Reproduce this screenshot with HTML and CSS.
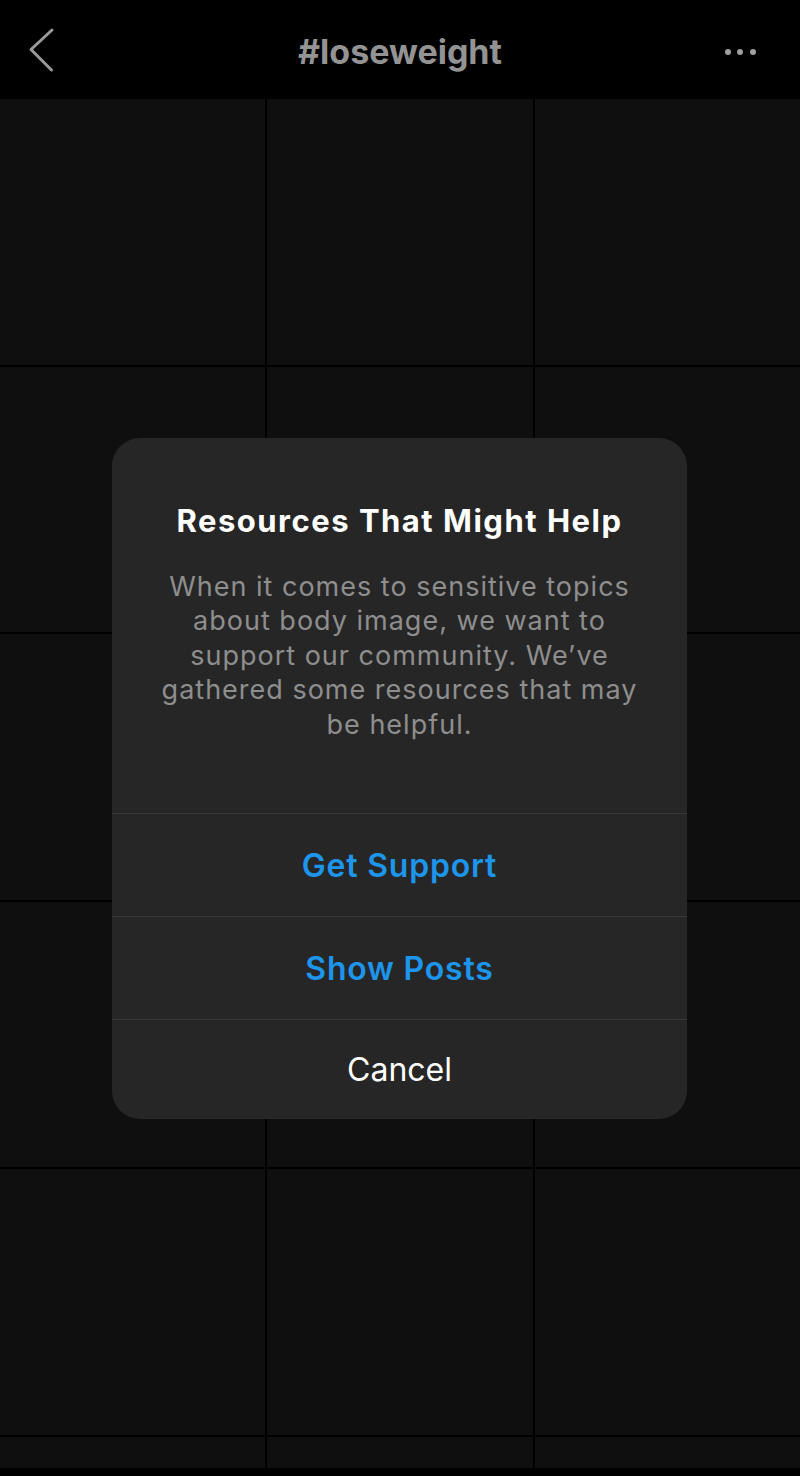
FILE: index.html
```html
<!DOCTYPE html>
<html lang="en">
<head>
  <meta charset="UTF-8" />
  <meta name="viewport" content="width=device-width, initial-scale=1.0"/>
  <title>#loseweight</title>
  <link rel="stylesheet" href="styles.css">
</head>
<body>
  <header class="topbar">
    <a class="back" aria-label="Back">
      <svg width="30" height="48" viewBox="0 0 30 48">
        <polyline points="25,3 4,22.5 24.5,43" fill="none" stroke="#9a9a9a" stroke-width="3" stroke-linecap="round" stroke-linejoin="round"/>
      </svg>
    </a>
    <h1>#loseweight</h1>
    <a class="more" aria-label="More">
      <span></span><span></span><span></span>
    </a>
  </header>

  <main class="grid">
    <div class="tile"></div><div class="tile"></div><div class="tile"></div>
    <div class="tile"></div><div class="tile"></div><div class="tile"></div>
    <div class="tile"></div><div class="tile"></div><div class="tile"></div>
    <div class="tile"></div><div class="tile"></div><div class="tile"></div>
    <div class="tile"></div><div class="tile"></div><div class="tile"></div>
    <div class="tile"></div><div class="tile"></div><div class="tile"></div>
  </main>

  <div class="dialog">
    <div class="dialog-body">
      <h2>Resources That Might Help</h2>
      <p>When it comes to sensitive topics about body image, we want to support our community. We’ve gathered some resources that may be helpful.</p>
    </div>
    <button class="action primary">Get Support</button>
    <button class="action primary">Show Posts</button>
    <button class="action cancel">Cancel</button>
  </div>
</body>
</html>
```

FILE: styles.css
```css
* { box-sizing: border-box; }
body {
  margin: 0;
  height: 1476px;
  overflow: hidden;
  background: #000;
  font-family: Inter, "Noto Sans", sans-serif;
  color: #fff;
}
.topbar {
  height: 99px;
  background: #000;
  display: flex;
  align-items: center;
  justify-content: center;
  position: relative;
}
.topbar h1 {
  margin: 4px 0 0;
  font-size: 34px;
  font-weight: 700;
  color: #939393;
}
.back {
  position: absolute;
  left: 27px;
  top: 27px;
  line-height: 0;
}
.more {
  position: absolute;
  right: 44px;
  top: 49px;
  display: flex;
  gap: 6.7px;
}
.more span {
  width: 6px;
  height: 6px;
  border-radius: 50%;
  background: #a0a0a0;
}
.grid {
  height: 1369px;
  overflow: hidden;
  display: grid;
  grid-template-columns: 1fr 1fr 1fr;
  grid-auto-rows: 265.5px;
  gap: 2px;
  background: #000;
}
.tile { background: #0f0f0f; }

.dialog {
  position: absolute;
  left: 112px;
  top: 438px;
  width: 575px;
  background: #262626;
  border-radius: 28px;
  overflow: hidden;
  display: flex;
  flex-direction: column;
}
.dialog-body {
  padding: 64px 32px 71px;
  text-align: center;
}
.dialog-body h2 {
  margin: 0 0 30px;
  font-size: 31px;
  line-height: 38px;
  font-weight: 700;
  letter-spacing: 1.5px;
  color: #fff;
}
.dialog-body p {
  margin: 0;
  font-size: 27px;
  line-height: 34.4px;
  letter-spacing: 1px;
  color: #8e8e8e;
}
.action {
  height: 103px;
  border: 0;
  border-top: 1.5px solid #383838;
  background: none;
  font-family: inherit;
  font-size: 32px;
  color: #fff;
  padding: 0;
}
.action.primary {
  color: #1d95ea;
  font-weight: 600;
  letter-spacing: 0.8px;
}
.action.cancel { height: 100px; }
```
